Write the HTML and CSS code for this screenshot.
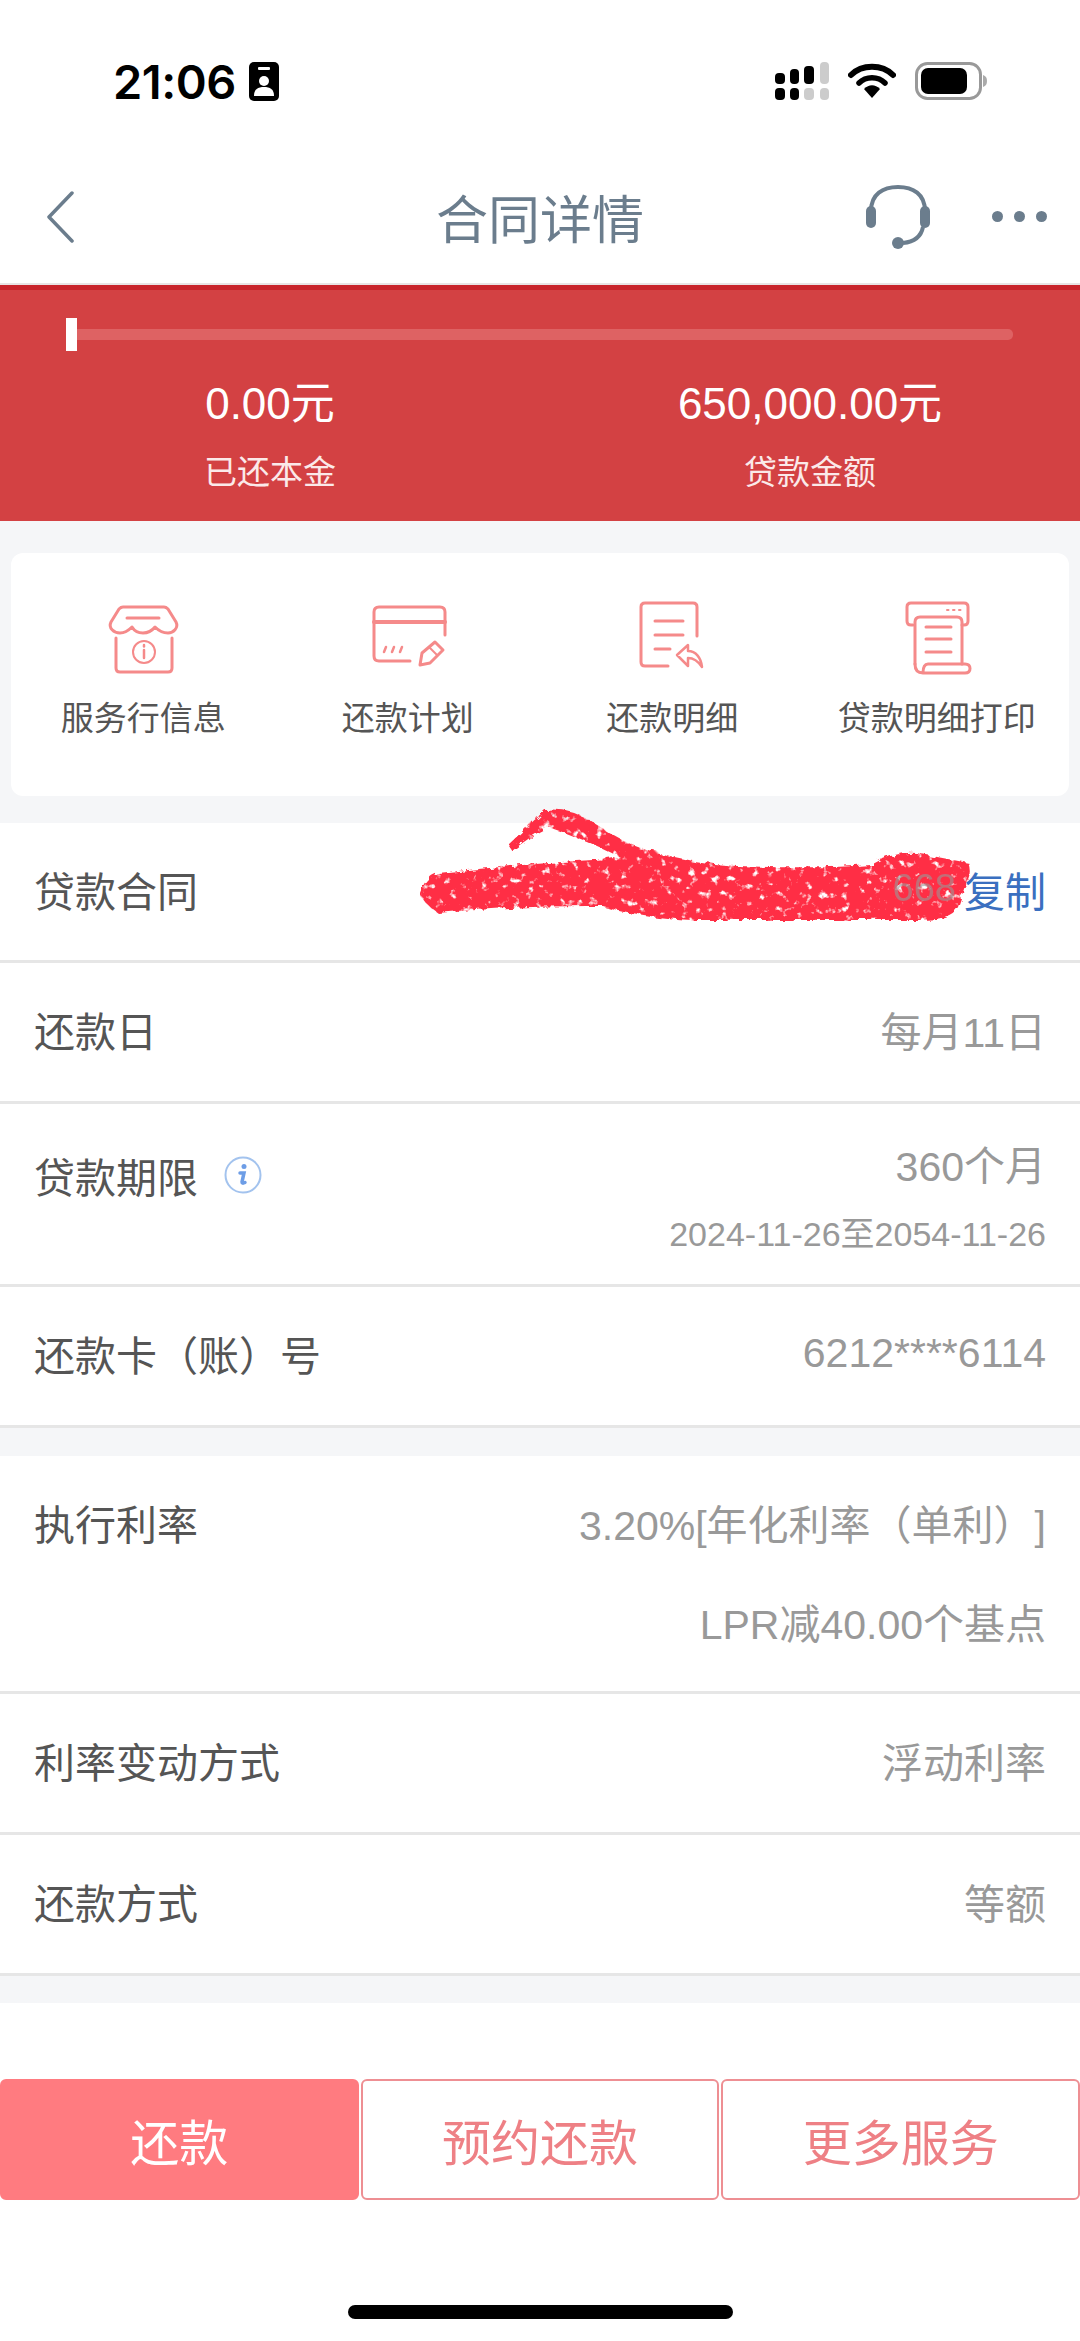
FILE: index.html
```html
<!DOCTYPE html>
<html lang="zh-CN">
<head>
    <meta charset="UTF-8">
    <meta name="viewport" content="width=device-width, initial-scale=1.0">
    <title>合同详情</title>
    <link rel="stylesheet" href="styles.css">
</head>
<body>
    <div class="status-bar">
        <div class="status-left">
            <span class="time">21:06</span>
            <svg class="badge" width="30" height="39" viewBox="0 0 30 39">
                <rect width="30" height="39" rx="5" fill="#000"/>
                <rect x="9" y="5" width="12" height="3" rx="1" fill="#fff"/>
                <circle cx="15" cy="19" r="5" fill="#fff"/>
                <path d="M5 34c0-7 4-9 10-9s10 2 10 9z" fill="#fff"/>
            </svg>
        </div>
        <div class="status-right">
            <svg width="54" height="38" viewBox="0 0 54 38">
                <rect x="0" y="11" width="10" height="11" rx="4" fill="#000"/>
                <rect x="15" y="7" width="9" height="15" rx="4" fill="#000"/>
                <rect x="29" y="4" width="10" height="18" rx="4" fill="#000"/>
                <rect x="45" y="0" width="9" height="22" rx="4" fill="#ccc"/>
                <rect x="0" y="26" width="10" height="12" rx="4" fill="#000"/>
                <rect x="15" y="26" width="9" height="12" rx="4" fill="#000"/>
                <rect x="29" y="26" width="10" height="12" rx="4" fill="#ccc"/>
                <rect x="45" y="26" width="9" height="12" rx="4" fill="#ccc"/>
            </svg>
            <svg width="48" height="36" viewBox="0 0 48 36">
                <path d="M3 12C14 1 34 1 45 12" fill="none" stroke="#000" stroke-width="6" stroke-linecap="round"/>
                <path d="M11 20C18 13 30 13 37 20" fill="none" stroke="#000" stroke-width="5.5" stroke-linecap="round"/>
                <path d="M16 26C21 21 27 21 32 26L24 35z" fill="#000"/>
            </svg>
            <svg width="72" height="38" viewBox="0 0 72 38">
                <rect x="1.5" y="1.5" width="64" height="35" rx="11" fill="#fff" stroke="#999" stroke-width="3"/>
                <rect x="6" y="6" width="46" height="26" rx="7" fill="#000"/>
                <path d="M68 13c3 1 4 3 4 6s-1 5-4 6z" fill="#aaa"/>
            </svg>
        </div>
    </div>

    <div class="nav">
        <svg class="nav-back" width="28" height="52" viewBox="0 0 28 52">
            <path d="M26 2L3 26l23 24" fill="none" stroke="#6b7d8d" stroke-width="3.5" stroke-linecap="round" stroke-linejoin="round"/>
        </svg>
        <div class="nav-title">合同详情</div>
        <div class="nav-tools">
            <svg width="66" height="64" viewBox="0 0 66 64">
                <path d="M6 26C6 9 18 2 33 2s27 7 27 24" fill="none" stroke="#6b7d8d" stroke-width="4"/>
                <rect x="1" y="21" width="10" height="22" rx="5" fill="#6b7d8d"/>
                <rect x="55" y="21" width="10" height="22" rx="5" fill="#6b7d8d"/>
                <path d="M58 42C56 52 48 57 38 58" fill="none" stroke="#6b7d8d" stroke-width="4"/>
                <circle cx="33" cy="58" r="6" fill="#6b7d8d"/>
            </svg>
            <div class="nav-dots"><i></i><i></i><i></i></div>
        </div>
    </div>

    <div class="summary">
        <div class="progress"><div class="progress-thumb"></div></div>
        <div class="summary-cols">
            <div class="summary-col">
                <div class="summary-value">0.00元</div>
                <div class="summary-label">已还本金</div>
            </div>
            <div class="summary-col">
                <div class="summary-value">650,000.00元</div>
                <div class="summary-label">贷款金额</div>
            </div>
        </div>
    </div>

    <div class="actions-wrap">
        <div class="actions">
            <div class="action">
                <svg class="action-icon" width="80" height="80" viewBox="0 0 80 80">
                    <path d="M20 7H61C63 7 64 8 65 9L73 22C76 28 70 33 65 33C60 33 56 31 52 27C48 32 44 33 40 33C36 33 32 32 29 27C25 31 21 33 17 33C11 33 5 28 8 22L16 9C17 8 18 7 20 7Z"/>
                    <path d="M24 18H56"/>
                    <path d="M13 38V68q0 4 4 4H65q4 0 4-4V38"/>
                    <circle cx="41" cy="52" r="11" stroke-width="2"/>
                    <path d="M41 50v8" stroke-width="2.5"/>
                    <path d="M41 45v1.5" stroke-width="2.5"/>
                </svg>
                <div class="action-text">服务行信息</div>
            </div>
            <div class="action">
                <svg class="action-icon" width="80" height="80" viewBox="0 0 80 80">
                    <path d="M42 61H11q-5 0-5-5V12q0-5 5-5H72q5 0 5 5V35"/>
                    <path d="M6 22H77" stroke-width="4"/>
                    <path d="M16 52l2-5M24 52l2-5M32 52l2-5" stroke-width="2.5"/>
                    <path d="M52 65l2-12 13-11 8 8-13 13z"/>
                    <path d="M61 47l8 8" stroke-width="2"/>
                </svg>
                <div class="action-text">还款计划</div>
            </div>
            <div class="action">
                <svg class="action-icon" width="80" height="80" viewBox="0 0 80 80">
                    <path d="M36 66H13q-4 0-4-4V7q0-4 4-4H61q4 0 4 4V36"/>
                    <path d="M23 21H51M23 35H51M23 49H38"/>
                    <path d="M45 55l11-10v6c8 0 13 7 14 16-4-6-8-9-14-9v8z" stroke-width="2.5"/>
                </svg>
                <div class="action-text">还款明细</div>
            </div>
            <div class="action">
                <svg class="action-icon" width="80" height="80" viewBox="0 0 80 80">
                    <path d="M16 25H14q-4 0-4-4V7q0-4 4-4H67q4 0 4 4V21q0 4-4 4H65"/>
                    <path d="M50 10h1.5M56 10h1.5M62 10h1.5" stroke-width="2"/>
                    <path d="M18 64V22q0-5 5-5H60q5 0 5 5V64"/>
                    <path d="M18 64q0 9 8 9H68q5 0 5-4.500t-5-4.500H31q-5 0-5 9"/>
                    <path d="M29 27H54M29 39H54M29 52H54"/>
                </svg>
                <div class="action-text">贷款明细打印</div>
            </div>
        </div>
    </div>

    <div class="section">
        <div class="row row-contract">
            <div class="row-label">贷款合同</div>
            <div class="row-value"><span class="masked">668</span><span class="copy">复制</span></div>
            <svg class="scribble" width="580" height="120" viewBox="0 0 580 120">
                <defs>
                    <filter id="crayon" x="-5%" y="-10%" width="110%" height="120%">
                        <feTurbulence type="fractalNoise" baseFrequency="0.13" numOctaves="3" seed="7" result="noise"/>
                        <feDisplacementMap in="SourceGraphic" in2="noise" scale="7" result="rough"/>
                        <feColorMatrix in="noise" type="matrix" values="0 0 0 0 0  0 0 0 0 0  0 0 0 0 0  5 0 0 0 -1" result="grain"/>
                        <feComposite in="rough" in2="grain" operator="in"/>
                    </filter>
                </defs>
                <path class="scribble-fill" filter="url(#crayon)" d="M88 38L125 3Q150 0 174 16Q200 34 228 43Q270 56 317 59Q400 62 451 58Q475 44 496 46L549 56Q554 70 545 79L538 100Q531 113 500 113H272Q220 110 183 99Q110 98 18 106Q2 95 0 86Q5 70 18 66Q100 57 188 52L200 50Q165 32 128 20Q112 28 92 44z"/>
            </svg>
        </div>
        <div class="row">
            <div class="row-label">还款日</div>
            <div class="row-value">每月11日</div>
        </div>
        <div class="row row-term">
            <div class="row-label">贷款期限
                <svg class="info" width="38" height="38" viewBox="0 0 38 38">
                    <circle cx="19" cy="19" r="17.500" fill="none" stroke="#a3c3ee" stroke-width="2"/>
                    <circle cx="20" cy="10.500" r="2.500" fill="#6d9de6"/>
                    <path d="M16 17h4l-2 9q0 2 3 .5" fill="none" stroke="#6d9de6" stroke-width="3.500" stroke-linecap="round"/>
                </svg>
            </div>
            <div class="row-stack">
                <div class="row-value">360个月</div>
                <div class="row-sub">2024-11-26至2054-11-26</div>
            </div>
        </div>
        <div class="row">
            <div class="row-label">还款卡（账）号</div>
            <div class="row-value">6212****6114</div>
        </div>
    </div>

    <div class="section section-rates">
        <div class="row row-rate">
            <div class="row-label">执行利率</div>
            <div class="row-stack row-stack-rate">
                <div class="row-value">3.20%[年化利率（单利）]</div>
                <div class="row-value">LPR减40.00个基点</div>
            </div>
        </div>
        <div class="row">
            <div class="row-label">利率变动方式</div>
            <div class="row-value">浮动利率</div>
        </div>
        <div class="row">
            <div class="row-label">还款方式</div>
            <div class="row-value">等额</div>
        </div>
    </div>

    <div class="footer">
        <div class="buttons">
            <button class="btn btn-primary">还款</button>
            <button class="btn">预约还款</button>
            <button class="btn">更多服务</button>
        </div>
        <div class="home-bar"></div>
    </div>
</body>
</html>
```
FILE: styles.css
```css
* { box-sizing: border-box; }
html, body { margin: 0; padding: 0; }
body {
    width: 1080px;
    height: 2341px;
    overflow: hidden;
    font-family: "Liberation Sans", "Noto Sans CJK SC", sans-serif;
    text-spacing-trim: space-all;
    background-color: white;
}

/* status bar */
.status-bar {
    height: 120px;
    padding: 62px 93px 0 113px;
    display: flex;
    justify-content: space-between;
    align-items: flex-start;
}
.status-left { display: flex; align-items: center; gap: 13px; height: 38px; }
.time { font-family: Inter, sans-serif; font-size: 47px; font-weight: 600; color: black; letter-spacing: -0.5px; }
.status-right { display: flex; align-items: center; gap: 19px; height: 38px; }
.status-right svg { display: block; }

/* nav */
.nav {
    height: 165px;
    padding: 30px 33px 0;
    display: grid;
    grid-template-columns: 1fr auto 1fr;
    align-items: center;
    border-bottom: 2px solid #e8e4e4;
}
.nav-back { display: block; margin-left: 13px; }
.nav-title { font-size: 52px; color: #6b7d8d; }
.nav-tools { display: flex; justify-content: flex-end; align-items: center; gap: 61px; }
.nav-tools svg { display: block; }
.nav-dots { display: flex; gap: 11px; }
.nav-dots i { width: 11px; height: 11px; border-radius: 50%; background-color: #6b7d8d; }

/* red summary */
.summary {
    height: 236px;
    background-color: #d34143;
    border-top: 5px solid #c8242b;
    padding: 28px 67px 0 66px;
}
.progress {
    height: 11px;
    margin-top: 11px;
    border-radius: 5px;
    background-color: #de6263;
    position: relative;
}
.progress-thumb {
    position: absolute;
    left: 0;
    top: -11px;
    width: 11px;
    height: 33px;
    background-color: white;
}
.summary-cols { display: flex; margin: 36px -67px 0 -66px; }
.summary-col { flex: 1; text-align: center; color: white; }
.summary-value { font-size: 44px; line-height: 56px; }
.summary-label { font-size: 33px; line-height: 46px; margin-top: 18px; color: #fbe9e9; }

/* shortcut card */
.actions-wrap { height: 302px; padding: 32px 11px 0; background-color: #f5f6f8; }
.actions {
    height: 243px;
    padding-top: 47px;
    background-color: white;
    border-radius: 12px;
    display: grid;
    grid-template-columns: repeat(4, 1fr);
    align-items: start;
}
.action { display: flex; flex-direction: column; align-items: center; }
.action-icon { display: block; fill: none; stroke: #f58a8a; stroke-width: 3; stroke-linecap: round; stroke-linejoin: round; }
.action-text { margin-top: 18px; font-size: 33px; line-height: 42px; color: #555; white-space: nowrap; }

/* detail rows */
.section { background-color: white; }
.section-rates { border-top: 28px solid #f5f6f8; }
.row {
    height: 141px;
    padding: 0 34px 6px;
    display: flex;
    justify-content: space-between;
    align-items: center;
    border-bottom: 3px solid #e6e6e6;
}
.row-label { font-size: 41px; color: #555; display: flex; align-items: center; }
.row-value { font-size: 41px; color: #999; white-space: nowrap; }
.row-stack { text-align: right; }
.row-sub { font-size: 34px; color: #999; margin-top: 14px; }
.row-contract { position: relative; height: 140px; }
.row-contract .row-value { display: flex; align-items: center; }
.masked { position: relative; z-index: 1; font-size: 38px; color: #999; margin-right: 8px; opacity: 0.6; }
.copy { color: #3a6fc0; }
.info { margin-left: 26px; }
.row-term { height: 183px; align-items: flex-start; padding-top: 29px; }
.row-term .row-label { margin-top: 12px; }
.row-rate { height: 238px; align-items: flex-start; padding-top: 36px; }
.row-stack-rate .row-value + .row-value { margin-top: 39px; }

/* red pen mark over the contract number */
.scribble { position: absolute; left: 420px; top: -16px; }
.scribble-fill { fill: #ff2f45; }

/* bottom buttons */
.footer { border-top: 27px solid #f5f6f8; padding-top: 76px; }
.buttons { display: grid; grid-template-columns: repeat(3, 1fr); gap: 2px; }
.btn {
    height: 121px;
    padding: 0;
    font-family: inherit;
    font-size: 49px;
    color: #ee8085;
    background-color: white;
    border: 2px solid #ee8f93;
    border-radius: 6px;
}
.btn-primary { background-color: #ff7b80; border-color: #ff7b80; color: white; }
.home-bar { width: 385px; height: 14px; margin: 105px auto 0; border-radius: 7px; background-color: black; }
```
